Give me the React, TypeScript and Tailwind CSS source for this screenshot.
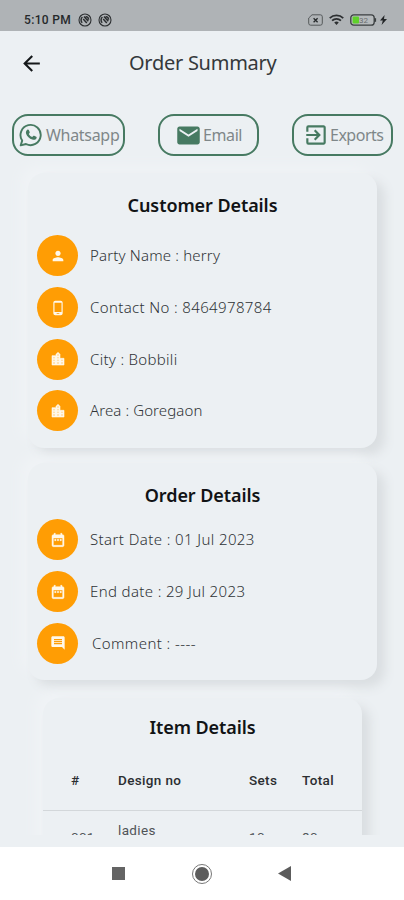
import type { ReactNode } from 'react';
import { MdArrowBack, MdComment, MdEmail, MdExitToApp, MdPerson, MdPhoneAndroid } from 'react-icons/md';

const raised = 'bg-[#ecf0f3] shadow-[8px_7px_11px_0px_#dadee1,-7px_-7px_13px_0px_#f0f3f6]';

function NoNfc() {
  return (
    <svg className="h-[14px] w-[14px]" viewBox="0 0 14 14" fill="none" stroke="#2c2f31">
      <circle cx="7" cy="7" r="6" strokeWidth="1.1" />
      <path d="M4.2 9.8a4 4 0 0 1 .2-5.8M6 3.6l4.3 4.6M7.6 3.4c2 .2 3 1.6 3 3.4M5.2 6l3.6 4" strokeWidth="1.5" />
    </svg>
  );
}

function WhatsappIcon() {
  return (
    <svg className="mr-[3px] h-[24px] w-[24px] shrink-0" viewBox="0 0 24 24" fill="none" stroke="#477a62">
      <path d="M3.2 17.6A10.1 10.1 0 1 1 7 21L1.7 22.4z" strokeWidth="1.9" strokeLinejoin="round" />
      <path
        d="M8.3 6.8c.5-.5 1.2-.4 1.5.2l.9 2c.2.4.1.7-.2 1l-.7.9c.8 1.5 1.9 2.5 3.4 3.2l1-1.1c.3-.3.6-.4 1-.2l2 1c.6.3.6.9.3 1.5-.7 1.4-2.4 1.9-4.2 1.3-3-1-5.2-3.1-6.2-5.9-.5-1.500.1-3 1.200-3.900z"
        fill="#477a62"
        stroke="none"
      />
    </svg>
  );
}

function CityIcon() {
  return (
    <svg className="size-[16px]" viewBox="0 0 24 24" fill="currentColor" stroke="currentColor" strokeWidth="0.9">
      <path d="M15 11V5l-3-3-3 3v2H3v14h18V11h-6zm-8 8H5v-2h2v2zm0-4H5v-2h2v2zm0-4H5V9h2v2zm6 8h-2v-2h2v2zm0-4h-2v-2h2v2zm0-4h-2V9h2v2zm0-4h-2V5h2v2zm6 12h-2v-2h2v2zm0-4h-2v-2h2v2z" />
    </svg>
  );
}

function CalendarIcon() {
  return (
    <svg className="size-[16px]" viewBox="0 0 24 24" fill="currentColor" stroke="currentColor" strokeWidth="0.7">
      <path d="M9 11H7v2h2v-2zm4 0h-2v2h2v-2zm4 0h-2v2h2v-2zm2-7h-1V2h-2v2H8V2H6v2H5c-1.110 0-1.990.9-1.990 2L3 20c0 1.100.89 2 2 2h14c1.100 0 2-.9 2-2V6c0-1.100-.9-2-2-2zm0 16H5V9h14v11z" />
    </svg>
  );
}

function StatusBar() {
  return (
    <div className="flex h-[31px] shrink-0 items-center bg-[#afb3b6] pl-[24px] pr-[17px] pt-[9px]">
      <span className="w-[54px] whitespace-nowrap font-['Roboto',sans-serif] text-[12px] font-medium leading-none tracking-[0.35px] text-[#26292b]">
        5:10 PM
      </span>
      <NoNfc />
      <span className="w-[6px]" />
      <NoNfc />
      <div className="ml-auto flex items-center">
        <svg className="h-[12px] w-[15px]" viewBox="0 0 15 12" fill="none" stroke="#55595b">
          <path d="M4 .8h8.3a2 2 0 0 1 2 2v6.4a2 2 0 0 1-2 2H2.7a2 2 0 0 1-2-2V4z" />
          <path d="M5.6 4.2l4 4M9.6 4.2l-4 4" strokeWidth="1.3" stroke="#26292b" />
        </svg>
        <svg className="ml-[6px] h-[12px] w-[15px]" viewBox="0 0 16 12" fill="none" stroke="#2c2f31" strokeWidth="1.9">
          <path d="M.8 4a10.4 10.4 0 0 1 14.4 0M3.3 6.7a6.8 6.8 0 0 1 9.4 0" />
          <path d="M5.6 8.6a3.6 3.6 0 0 1 4.8 0L8 11.3z" fill="#2c2f31" stroke="none" />
        </svg>
        <svg className="ml-[6px] h-[12px] w-[27px]" viewBox="0 0 27 12">
          <rect x=".8" y=".8" width="23.4" height="10.4" rx="3" fill="#b6babc" stroke="#3b3f41" strokeWidth="1.3" />
          <rect x="2.6" y="2.6" width="6.4" height="6.8" rx="1" fill="#5fd02a" />
          <path d="M25.2 4.2v3.6" stroke="#3b3f41" strokeWidth="1.8" />
          <text x="9" y="9" fontSize="8" fill="#6b6f71" className="font-['Roboto',sans-serif]">
            32
          </text>
        </svg>
        <svg className="ml-[3px] h-[10px] w-[7px]" viewBox="0 0 7 10" fill="#222527">
          <path d="M4.6 0L0 5.6h2.8L1.6 10 7 4H4z" />
        </svg>
      </div>
    </div>
  );
}

function ActionButton({ className, icon, children }: { className: string; icon: ReactNode; children: ReactNode }) {
  return (
    <button
      className={`flex h-[42px] items-center whitespace-nowrap rounded-[16px] border-2 border-[#477a62] text-[16px] leading-none text-[#7f8789] ${className}`}
    >
      {icon}
      {children}
    </button>
  );
}

function Row({ icon, text, className }: { icon: ReactNode; text: string; className: string }) {
  return (
    <div className="flex h-[51.7px] items-center">
      <span className="flex size-[41px] shrink-0 items-center justify-center rounded-full bg-[#ff9d04] text-[16px] text-[#fff8ea]">
        {icon}
      </span>
      <span className={`whitespace-nowrap text-[15px] font-light leading-none text-[#2f3336] ${className}`}>{text}</span>
    </div>
  );
}

function Heading({ className, children }: { className: string; children: ReactNode }) {
  return <h2 className={`text-center text-[18px] font-semibold leading-none tracking-[-0.08px] text-[#111315] ${className}`}>{children}</h2>;
}

export default function App() {
  return (
    <div className="flex h-[900px] w-[404px] flex-col overflow-hidden bg-[#ecf0f3] font-['Noto_Sans','Open_Sans',sans-serif]">
      <StatusBar />
      <header className="flex h-[64px] shrink-0 items-center">
        <MdArrowBack className="ml-[19px] size-[25px] text-[#15181a]" />
        <h1 className="ml-[85px] whitespace-nowrap text-[20px] leading-none tracking-[-0.27px] text-[#34383b]">Order Summary</h1>
      </header>
      <div className="flex shrink-0 justify-between pl-[12px] pr-[11px] pt-[19px]">
        <ActionButton className="w-[113px] pl-[5px] tracking-[-0.3px]" icon={<WhatsappIcon />}>
          Whatsapp
        </ActionButton>
        <ActionButton className="w-[101px] pl-[15px] tracking-[-0.4px]" icon={<MdEmail className="mr-px size-[27px] shrink-0 text-[#477a62]" />}>
          Email
        </ActionButton>
        <ActionButton className="w-[101px] pl-[9px] tracking-[-0.5px]" icon={<MdExitToApp className="mr-px size-[26px] shrink-0 text-[#477a62]" />}>
          Exports
        </ActionButton>
      </div>
      <main className="mx-[10px] h-[679px] shrink-0 overflow-hidden pl-[18px] pr-[17px] pt-[17px]">
        <section className={`h-[275px] rounded-[16px] pl-[9px] pt-[23px] ${raised}`}>
          <Heading className="-ml-[9px] h-[34px]">Customer Details</Heading>
          <Row icon={<MdPerson />} text="Party Name : herry" className="pl-[12px] tracking-[0.17px]" />
          <Row icon={<MdPhoneAndroid />} text="Contact No : 8464978784" className="pl-[12px] tracking-[0.36px]" />
          <Row icon={<CityIcon />} text="City : Bobbili" className="pl-[12px] tracking-[0.3px]" />
          <Row icon={<CityIcon />} text="Area : Goregaon" className="pl-[12px] tracking-[0.1px]" />
        </section>
        <section className={`mt-[15px] h-[217px] rounded-[16px] pl-[9px] pt-[23px] ${raised}`}>
          <Heading className="-ml-[9px] h-[28px]">Order Details</Heading>
          <Row icon={<CalendarIcon />} text="Start Date : 01 Jul 2023" className="pl-[12px] tracking-[0.4px]" />
          <Row icon={<CalendarIcon />} text="End date : 29 Jul 2023" className="pl-[12px] tracking-[0.36px]" />
          <Row icon={<MdComment />} text="Comment : ----" className="pl-[14px] tracking-[0.42px]" />
        </section>
        <section className={`mx-[15px] mt-[18px] h-[300px] rounded-[16px] pt-[20px] ${raised}`}>
          <Heading className="h-[34px]">Item Details</Heading>
          <div className="font-['Roboto',sans-serif] leading-none">
            <div className="grid h-[59px] grid-cols-[47px_131px_53px_1fr] items-center border-b border-[#d3d7da] pl-[28px] text-[13.5px] font-medium tracking-[0.35px] text-[#2b2e31]">
              <span>#</span>
              <span>Design no</span>
              <span>Sets</span>
              <span>Total</span>
            </div>
            <div className="grid h-[54px] grid-cols-[47px_131px_53px_1fr] items-center pl-[28px] text-[13.5px] tracking-[0.35px] text-[#505457]">
              <span>001</span>
              <span className="pb-[14px]">ladies</span>
              <span>10</span>
              <span>80</span>
            </div>
          </div>
        </section>
      </main>
      <div className="h-[12px] shrink-0" />
      <nav className="flex h-[53px] shrink-0 items-center bg-white pl-[112px]">
        <span className="size-[13px] bg-[#646464]" />
        <span className="ml-[67px] flex size-[20px] items-center justify-center rounded-full border-[1.5px] border-[#777777]">
          <span className="size-[14px] rounded-full bg-[#5c5c5c]" />
        </span>
        <svg className="ml-[66px] h-[15px] w-[13px]" viewBox="0 0 13 15" fill="#5c5c5c">
          <path d="M0 7.5L13 0v15z" />
        </svg>
      </nav>
    </div>
  );
}
